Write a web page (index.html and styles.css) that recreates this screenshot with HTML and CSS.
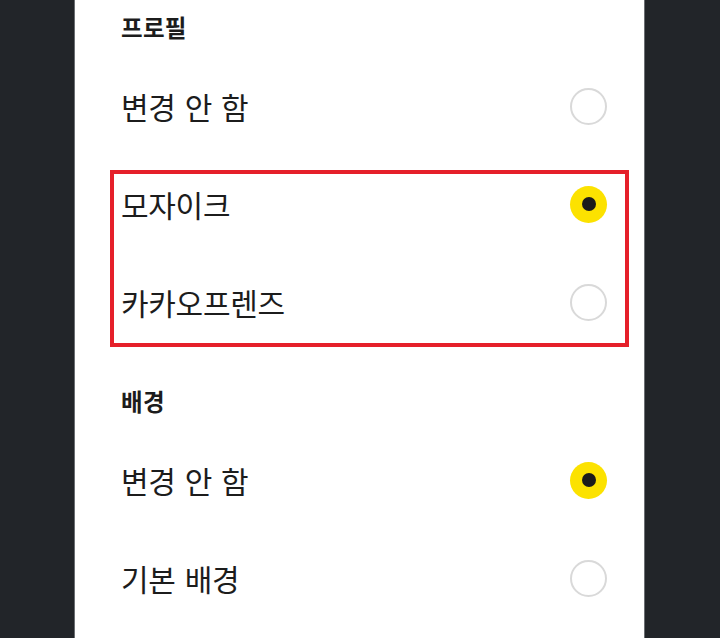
FILE: index.html
```html
<!DOCTYPE html>
<html lang="ko">
<head>
<meta charset="utf-8">
<link rel="stylesheet" href="styles.css">
</head>
<body>
<div class="sheet">
  <section class="group first">
    <div class="group-title">프로필</div>
    <div class="option"><span class="label">변경 안 함</span><span class="radio"></span></div>
    <div class="option"><span class="label">모자이크</span><span class="radio on"></span></div>
    <div class="option"><span class="label">카카오프렌즈</span><span class="radio"></span></div>
  </section>
  <section class="group second">
    <div class="group-title">배경</div>
    <div class="option"><span class="label">변경 안 함</span><span class="radio on"></span></div>
    <div class="option"><span class="label">기본 배경</span><span class="radio"></span></div>
  </section>
  <div class="highlight"></div>
</div>
</body>
</html>
```
FILE: styles.css
```css
html, body {
  margin: 0;
  padding: 0;
  height: 100%;
}
body {
  background: #222529;
  font-family: "Noto Sans CJK KR", "Noto Sans", sans-serif;
  color: #1c1c1c;
  overflow: hidden;
}
.sheet {
  position: relative;
  margin-left: 75px;
  width: 569px;
  height: 638px;
  background: #ffffff;
  box-shadow: -1px 0 0 #6b6e72, 1px 0 0 #6b6e72;
  padding: 0 37px 0 46px;
  box-sizing: border-box;
}
.group.first {
  padding-top: 7px;
}
.group.second {
  padding-top: 30px;
}
.group-title {
  height: 40px;
  line-height: 40px;
  font-size: 23.5px;
  font-weight: 700;
  letter-spacing: 0.3px;
  margin-bottom: 10px;
}
.option {
  height: 98px;
  display: flex;
  align-items: center;
  justify-content: space-between;
}
.label {
  font-size: 30px;
  letter-spacing: -0.3px;
  word-spacing: 1px;
}
.radio {
  width: 37px;
  height: 37px;
  border-radius: 50%;
  border: 2.5px solid #d9d9d9;
  box-sizing: border-box;
  display: flex;
  align-items: center;
  justify-content: center;
}
.radio.on {
  border: none;
  background: #fce200;
}
.radio.on::after {
  content: "";
  width: 14px;
  height: 14px;
  border-radius: 50%;
  background: #1b1b1b;
}
.highlight {
  position: absolute;
  left: 35px;
  top: 170px;
  width: 519px;
  height: 177px;
  border: 4px solid #e5202a;
  box-sizing: border-box;
}
```
